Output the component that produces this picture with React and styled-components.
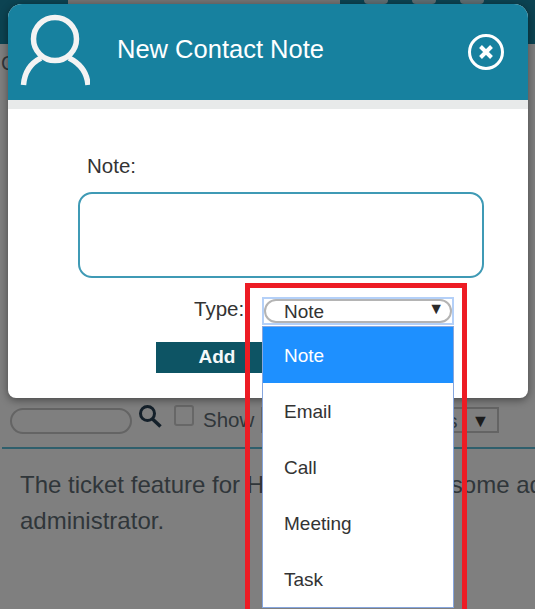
import React from "react";
import styled, { createGlobalStyle } from "styled-components";

const GlobalStyle = createGlobalStyle`
  html, body {
    margin: 0;
    padding: 0;
    background-color: #7f7f7f;
  }

  body {
    font-family: "Liberation Sans", Arial, sans-serif;
    color: #333;
  }
`;

const Page = styled.div`
  position: relative;
  width: 535px;
  height: 609px;
  overflow: hidden;
  background-color: #7f7f7f;
`;

/* page behind the dialog */
const TopBar = styled.div`
  display: flex;
  gap: 24px;
  height: 44px;
  padding-left: 68px;
  box-sizing: border-box;
  background-color: #0c4352;
`;

const TopPill = styled.div`
  width: 272px;
  height: 4px;
  background-color: #747474;
`;

const TopBump = styled.div`
  width: 24px;
  height: 4px;
  border-radius: 0 0 10px 10px;
  background-color: #5f6f74;
`;

const Backdrop = styled.div`
  height: 361px;
  padding-top: 8px;
  box-sizing: border-box;
`;

const Crumb = styled.p`
  margin: 0 0 0 1px;
  font-size: 20px;
  color: #30363a;
`;

const Toolbar = styled.div`
  display: flex;
  align-items: flex-start;
  height: 42px;
  padding-left: 10px;
`;

const SearchBox = styled.div`
  width: 122px;
  height: 26px;
  margin-top: 3px;
  box-sizing: border-box;
  border: 2px solid #646464;
  border-radius: 13px;
`;

const SearchIcon = styled.svg`
  width: 26px;
  height: 26px;
  margin-left: 5px;
  flex-shrink: 0;
`;

const CheckBox = styled.div`
  width: 20px;
  height: 21px;
  margin-left: 11px;
  box-sizing: border-box;
  border: 2px solid #676767;
  border-radius: 3px;
`;

const ShowLabel = styled.span`
  margin: 2px 0 0 9px;
  font-size: 20.5px;
  line-height: 25px;
  color: #30363a;
`;

const StatusSelect = styled.div`
  display: flex;
  justify-content: space-between;
  width: 238px;
  height: 26px;
  margin: 2px 0 0 7px;
  padding: 0 8px 0 0;
  box-sizing: border-box;
  border: 2px solid #646464;
  font-size: 20px;
  line-height: 24px;
  color: #30363a;
`;

const StatusText = styled.span`
  margin-left: auto;
  margin-right: 14px;
`;

const StatusArrow = styled.span`
  font-size: 18px;
  color: #1c1c1c;
`;

const Rule = styled.div`
  height: 2px;
  margin-left: 2px;
  background-color: #2f5f6c;
`;

const Message = styled.p`
  margin: 18px 0 0 20px;
  font-size: 24px;
  line-height: 36px;
  white-space: nowrap;
  color: #30363a;
`;

/* dialog */
const Modal = styled.section`
  position: absolute;
  top: 4px;
  left: 8px;
  width: 520px;
  height: 394px;
  border-radius: 14px 14px 8px 8px;
  background-color: #fff;
  box-shadow: 0 2px 9px rgba(0, 0, 0, 0.45);
`;

const ModalHeader = styled.header`
  display: flex;
  align-items: center;
  height: 96px;
  padding: 0 23px 0 12px;
  box-sizing: border-box;
  border-radius: 14px 14px 0 0;
  background-color: #17819f;
`;

const PersonIcon = styled.svg`
  width: 70px;
  height: 80px;
  flex-shrink: 0;
`;

const Title = styled.h1`
  flex-grow: 1;
  margin: 0 0 6px 27px;
  font-size: 25.5px;
  font-weight: 400;
  color: #fff;
`;

const CloseIcon = styled.svg`
  width: 38px;
  height: 38px;
`;

const HeaderStrip = styled.div`
  height: 9px;
  background-color: #e8eaea;
`;

const ModalBody = styled.div`
  padding: 45px 44px 0 70px;
`;

const FieldLabel = styled.label`
  display: block;
  font-size: 20.5px;
  line-height: 23px;
  color: #333;
`;

const NoteLabel = styled(FieldLabel)`
  padding-left: 9px;
`;

const TypeLabel = styled(FieldLabel)`
  width: 68px;
`;

const NoteInput = styled.div`
  height: 86px;
  margin-top: 15px;
  box-sizing: border-box;
  border: 2px solid #3f9ab5;
  border-radius: 14px;
`;

const TypeRow = styled.div`
  display: flex;
  align-items: flex-start;
  margin: 19px 0 0 116px;
`;

const SelectWrap = styled.div`
  position: relative;
  width: 192px;
`;

const SelectFocus = styled.div`
  height: 28px;
  box-sizing: border-box;
  border: 2px solid #b4d0f8;
  background-color: #fff;
`;

const SelectInner = styled.div`
  display: flex;
  align-items: center;
  justify-content: space-between;
  height: 24px;
  padding: 2px 6px 0 18px;
  box-sizing: border-box;
  border: 2px solid #b4b4b4;
  border-radius: 13px;
  font-size: 19px;
  color: #333;
`;

const SelectArrow = styled.span`
  margin-bottom: 7px;
  font-size: 16px;
  color: #2b2b2b;
`;

const OptionList = styled.ul`
  position: absolute;
  top: 29px;
  left: 0;
  z-index: 2;
  width: 192px;
  margin: 0;
  padding: 0;
  box-sizing: border-box;
  border: 1px solid #86a6de;
  list-style: none;
  background-color: #fff;
`;

const Option = styled.li`
  height: 56px;
  padding-left: 21px;
  font-size: 19px;
  line-height: 58px;
  color: ${({ $selected }) => ($selected ? "#fff" : "#333")};
  background-color: ${({ $selected }) => ($selected ? "#1e90ff" : "#fff")};
`;

const AddButton = styled.button`
  display: block;
  width: 125px;
  height: 31px;
  margin: 17px 0 0 78px;
  padding: 0 3px 2px 0;
  border: none;
  font-family: inherit;
  font-size: 19px;
  font-weight: 700;
  color: #f4f8f9;
  background-color: #0d5464;
`;

/* annotation drawn over the screenshot */
const Highlight = styled.div`
  position: absolute;
  top: 283px;
  left: 245px;
  z-index: 3;
  width: 222px;
  height: 360px;
  box-sizing: border-box;
  border: 5px solid #ed1c24;
`;

const typeOptions = ["Note", "Email", "Call", "Meeting", "Task"];

const App = () => {
  return (
    <Page>
      <GlobalStyle />
      <TopBar>
        <TopPill />
        <TopBump />
        <TopBump />
        <TopBump />
      </TopBar>
      <Backdrop>
        <Crumb>C</Crumb>
      </Backdrop>
      <Toolbar>
        <SearchBox />
        <SearchIcon viewBox="0 0 26 26">
          <circle cx="10.5" cy="8.5" r="7" fill="none" stroke="#14202a" strokeWidth="3" />
          <path d="M15.5 14 L23.5 21.5" stroke="#14202a" strokeWidth="3.5" />
        </SearchIcon>
        <CheckBox />
        <ShowLabel>Show</ShowLabel>
        <StatusSelect>
          <StatusText>Status</StatusText>
          <StatusArrow>▼</StatusArrow>
        </StatusSelect>
      </Toolbar>
      <Rule />
      <Message>
        The ticket feature for HelpDesk requires some additional setup from your
        <br />
        administrator.
      </Message>

      <Modal>
        <ModalHeader>
          <PersonIcon viewBox="0 0 70 80" fill="none" stroke="#f3f3f3">
            <circle cx="35" cy="27" r="21.5" strokeWidth="5.5" />
            <path d="M3.5 73 C4.5 60 11 51 21 46" strokeWidth="5.5" />
            <path d="M49 46 C59 51 67 60 68 73" strokeWidth="5.5" />
          </PersonIcon>
          <Title>New Contact Note</Title>
          <CloseIcon viewBox="0 0 38 38" fill="none" stroke="#fff">
            <circle cx="19" cy="19" r="16.5" strokeWidth="3" />
            <path d="M13.5 13.5 L24.5 24.5 M24.5 13.5 L13.5 24.5" strokeWidth="4" />
          </CloseIcon>
        </ModalHeader>
        <HeaderStrip />
        <ModalBody>
          <NoteLabel>Note:</NoteLabel>
          <NoteInput />
          <TypeRow>
            <TypeLabel>Type:</TypeLabel>
            <SelectWrap>
              <SelectFocus>
                <SelectInner>
                  Note
                  <SelectArrow>▼</SelectArrow>
                </SelectInner>
              </SelectFocus>
              <OptionList>
                {typeOptions.map((option, index) => (
                  <Option key={option} $selected={index === 0}>
                    {option}
                  </Option>
                ))}
              </OptionList>
            </SelectWrap>
          </TypeRow>
          <AddButton>Add</AddButton>
        </ModalBody>
      </Modal>
      <Highlight />
    </Page>
  );
};

export default App;
